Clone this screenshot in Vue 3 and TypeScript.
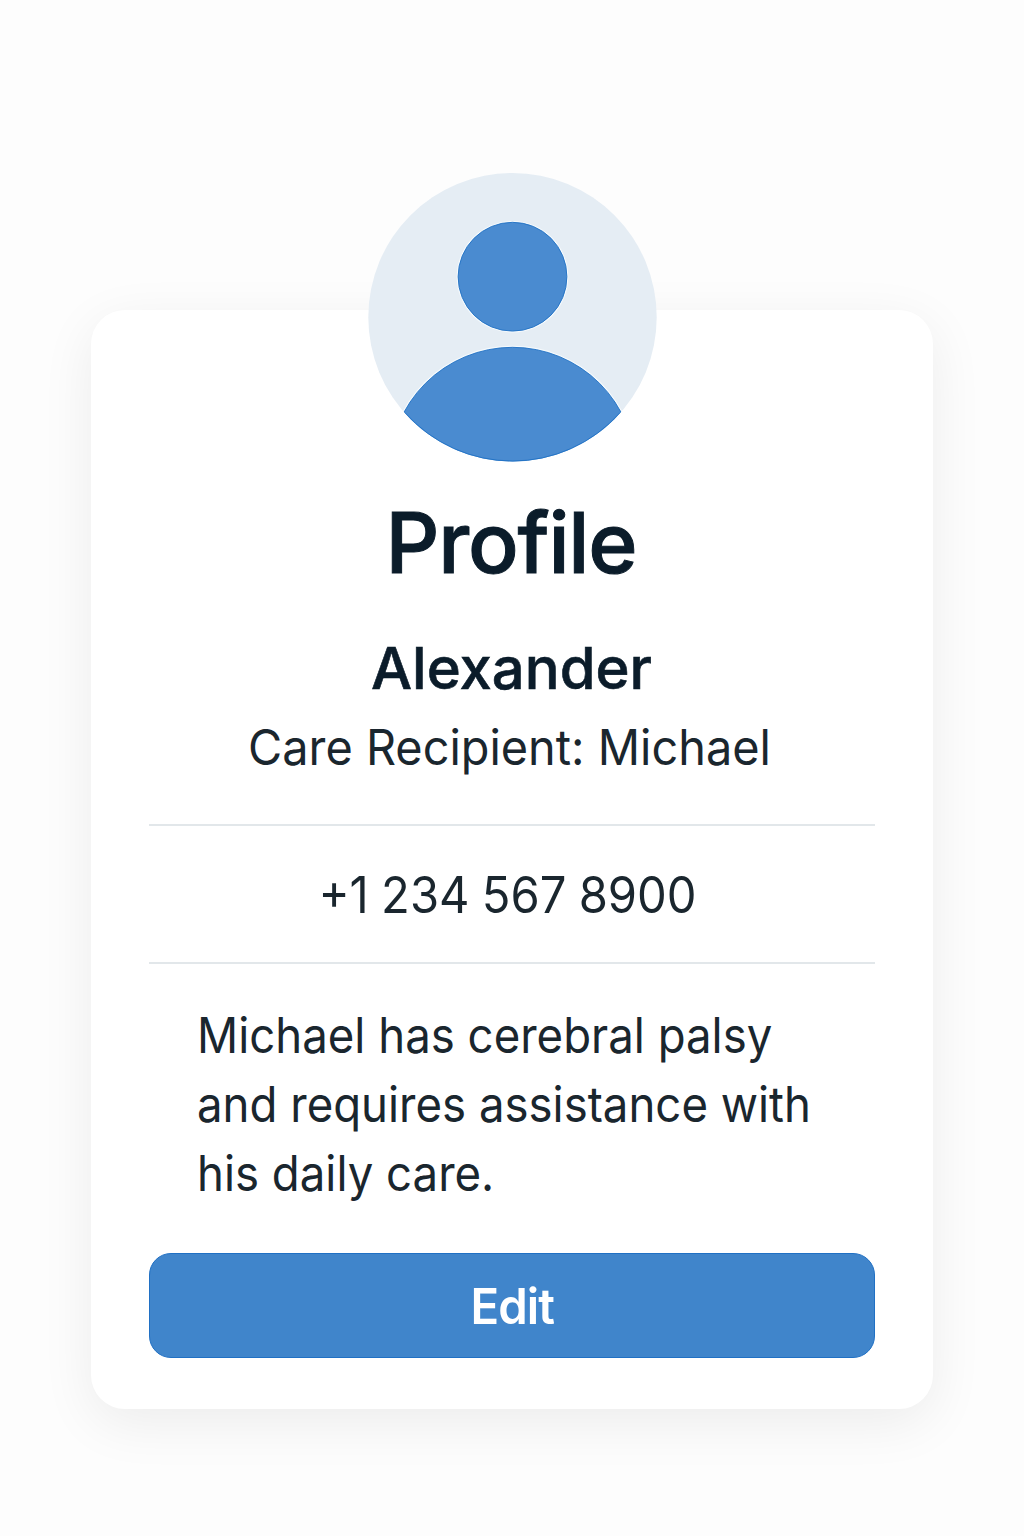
<script setup lang="ts">
interface Profile {
  name: string
  recipient: string
  phone: string
  bio: string[]
}

const profile: Profile = {
  name: 'Alexander',
  recipient: 'Michael',
  phone: '+1 234 567 8900',
  bio: ['Michael has cerebral palsy', 'and requires assistance with', 'his daily care.'],
}
</script>

<template>
  <main class="page">
    <section class="card">
      <svg class="avatar" viewBox="0 0 289 289" aria-hidden="true">
        <defs>
          <clipPath id="avatar-clip"><circle cx="144.500" cy="144.200" r="144.200" /></clipPath>
        </defs>
        <circle cx="144.500" cy="144.200" r="144.200" fill="#e5edf4" />
        <circle cx="144.500" cy="103.700" r="55.800" fill="#f5fafd" />
        <circle cx="144.500" cy="103.700" r="54.400" fill="#4a8bd0" stroke="#1f70c4" stroke-width="0.900" />
        <g clip-path="url(#avatar-clip)">
          <circle cx="144.500" cy="297.500" r="124.800" fill="#f5fafd" />
          <circle cx="144.500" cy="297.500" r="123.200" fill="#4a8bd0" stroke="#1f70c4" stroke-width="0.900" />
        </g>
        <path d="M36.800 239.500 A143.800 143.800 0 0 0 252.200 239.500" fill="none" stroke="#1f70c4" stroke-width="0.900" />
      </svg>
      <h1 class="title"><span>Profile</span></h1>
      <h2 class="name"><span>{{ profile.name }}</span></h2>
      <p class="recipient"><span>Care Recipient: {{ profile.recipient }}</span></p>
      <p class="phone"><span>{{ profile.phone }}</span></p>
      <p class="bio">
        <span v-for="line in profile.bio" :key="line" class="line">{{ line }}</span>
      </p>
      <button class="edit" type="button"><span>Edit</span></button>
    </section>
  </main>
</template>

<style>
body {
  background: #fdfdfd;
}
</style>

<style scoped>
.page {
  box-sizing: border-box;
  height: 1536px;
  padding: 310px 91px 0;
  overflow: hidden;
  background: #fdfdfd;
  font-family: Inter, "Liberation Sans", sans-serif;
  color: #1a262e;
}
.card {
  box-sizing: border-box;
  display: flex;
  flex-direction: column;
  height: 1099px;
  padding: 0 58px;
  border-radius: 34px;
  background: #fff;
  box-shadow: 0 14px 54px rgba(0, 0, 0, 0.07);
  text-align: center;
}
.avatar {
  flex: none;
  align-self: center;
  width: 289px;
  height: 289px;
  margin-top: -137px;
}
h1, h2, p {
  margin: 0;
  white-space: nowrap;
}
h1 span, h2 span, p span, .edit span {
  display: inline-block;
}
.title {
  height: 100px;
  margin-top: 30px;
  font-size: 84px;
  line-height: 101px;
  font-weight: 500;
  letter-spacing: -1.2px;
  -webkit-text-stroke: 1px #0b1c2a;
  color: #0b1c2a;
}
.title span {
  transform: translateX(-1px);
}
.name {
  height: 70px;
  margin-top: 41px;
  font-size: 58px;
  line-height: 70px;
  font-weight: 500;
  -webkit-text-stroke: 0.6px #0b1c2a;
  color: #0b1c2a;
}
.name span {
  transform: translateX(-0.5px);
}
.recipient {
  height: 121px;
  border-bottom: 2px solid #e2e7ea;
  font-size: 49px;
  line-height: 89px;
}
.recipient span {
  transform: translateX(-3px) scaleX(0.956);
}
.phone {
  height: 136px;
  border-bottom: 2px solid #e2e7ea;
  font-size: 50px;
  line-height: 139px;
}
.phone span {
  word-spacing: -1px;
  transform: translateX(-4px) scaleX(0.943);
}
.bio {
  padding: 37px 0 0 48px;
  text-align: left;
  font-size: 49px;
  line-height: 69px;
}
p .line {
  display: block;
  transform: scaleX(0.93);
  transform-origin: 0 0;
}
.edit {
  height: 105px;
  margin-top: 45px;
  padding: 0;
  border: 1px solid #2070c4;
  border-radius: 22px;
  background: #4085cb;
  color: #fff;
  font: 600 49px/103px Inter, "Liberation Sans", sans-serif;
}
.edit span {
  letter-spacing: -1px;
  transform: translateY(1px) scaleX(0.965);
}
</style>
